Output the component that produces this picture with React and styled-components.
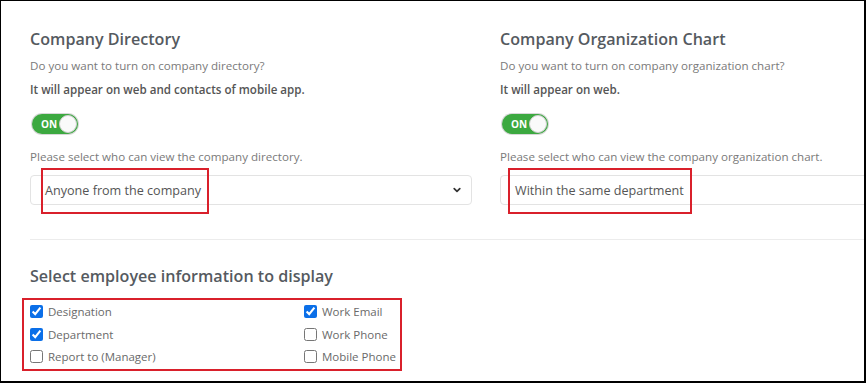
import React from "react";
import styled, { createGlobalStyle } from "styled-components";

const Global = createGlobalStyle`
  html, body { margin: 0; padding: 0; background: #fff; }
  body { font-family: "Open Sans", "Noto Sans", Arial, sans-serif; }
  * { box-sizing: border-box; }
`;

const Frame = styled.div`
  width: 866px;
  height: 383px;
  border-top: 1px solid #000;
  border-left: 1px solid #000;
  border-right: 2px solid #000;
  border-bottom: 2px solid #000;
  overflow: hidden;
  background: #fff;
  padding: 27px 0 0 29px;
`;

const Columns = styled.div`
  display: grid;
  grid-template-columns: 442px 442px;
  column-gap: 28px;
`;

const Column = styled.div`
  display: flex;
  flex-direction: column;
`;

const Heading = styled.h2`
  margin: 0;
  font-size: 16.1px;
  line-height: 22px;
  font-weight: 600;
  color: #555a5f;
`;

const Text = styled.p`
  margin: ${(p) => p.$mt || 0}px 0 0 0;
  font-size: 11.6px;
  line-height: 18px;
  font-weight: ${(p) => (p.$bold ? 600 : 400)};
  color: ${(p) => (p.$bold ? "#555" : "#7a7a7a")};
`;

const Toggle = styled.div`
  margin: 15px 0 0 2px;
  width: 46px;
  height: 20px;
  border-radius: 10px;
  background: #3ca940;
  box-shadow: 0 0 0 1px #d8d8d8;
  display: flex;
  align-items: center;
  justify-content: space-between;
  padding: 0 1px 0 9px;
`;

const ToggleLabel = styled.span`
  color: #fff;
  font-size: 10px;
  font-weight: 700;
  line-height: 1;
`;

const Knob = styled.span`
  width: 18px;
  height: 18px;
  border-radius: 50%;
  background: #fafafa;
  border: 1px solid #cfcfcf;
`;

const SelectBox = styled.div`
  position: relative;
  margin-top: 9px;
  height: 30px;
  border: 1px solid #e3e3e3;
  border-radius: 4px;
  display: flex;
  align-items: center;
  justify-content: space-between;
  padding: 0 9px 0 14px;
  font-size: 12.6px;
  color: #555;
`;

const Highlight = styled.span`
  position: absolute;
  left: ${(p) => p.$left}px;
  top: -8px;
  height: 46px;
  width: ${(p) => p.$w}px;
  border: 2px solid #d9202b;
  pointer-events: none;
`;

const Divider = styled.hr`
  margin: 34px 0 0 0;
  border: 0;
  border-top: 1px solid #ececec;
  height: 0;
`;

const SectionHeading = styled(Heading)`
  margin-top: 25px;
`;

const CheckGroup = styled.div`
  margin: 11px 0 0 -8px;
  width: 380px;
  border: 2px solid #d9202b;
  padding: 0 4px 1px 6px;
  display: grid;
  grid-template-columns: 274px auto;
  grid-auto-flow: column;
  grid-template-rows: repeat(3, 22.7px);
`;

const CheckRow = styled.label`
  display: flex;
  align-items: center;
  gap: 5px;
  font-size: 11.5px;
  color: #6a6a6a;
  white-space: nowrap;
`;

const Box = styled.input`
  margin: 0;
  width: 13px;
  height: 13px;
  accent-color: #0b6fe8;
`;

const Chevron = () => (
  <svg width="10" height="10" viewBox="0 0 10 10">
    <path d="M2.2 3.6 L5 6.4 L7.8 3.6" fill="none" stroke="#333" strokeWidth="1.7" strokeLinecap="round" strokeLinejoin="round" />
  </svg>
);

const left = [
  ["Designation", true],
  ["Department", true],
  ["Report to (Manager)", false],
];
const right = [
  ["Work Email", true],
  ["Work Phone", false],
  ["Mobile Phone", false],
];

export default function App() {
  return (
    <Frame>
      <Global />
      <Columns>
        <Column>
          <Heading>Company Directory</Heading>
          <Text $mt={7}>Do you want to turn on company directory?</Text>
          <Text $mt={6} $bold>It will appear on web and contacts of mobile app.</Text>
          <Toggle>
            <ToggleLabel>ON</ToggleLabel>
            <Knob />
          </Toggle>
          <Text $mt={14}>Please select who can view the company directory.</Text>
          <SelectBox>
            <span>Anyone from the company</span>
            <Chevron />
            <Highlight $left={10} $w={168} />
          </SelectBox>
        </Column>
        <Column>
          <Heading>Company Organization Chart</Heading>
          <Text $mt={7}>Do you want to turn on company organization chart?</Text>
          <Text $mt={6} $bold>It will appear on web.</Text>
          <Toggle>
            <ToggleLabel>ON</ToggleLabel>
            <Knob />
          </Toggle>
          <Text $mt={14}>Please select who can view the company organization chart.</Text>
          <SelectBox>
            <span>Within the same department</span>
            <Highlight $left={7} $w={184} />
          </SelectBox>
        </Column>
      </Columns>
      <Divider />
      <SectionHeading>Select employee information to display</SectionHeading>
      <CheckGroup>
        {[...left, ...right].map(([label, checked]) => (
          <CheckRow key={label}>
            <Box type="checkbox" defaultChecked={checked} />
            {label}
          </CheckRow>
        ))}
      </CheckGroup>
    </Frame>
  );
}
